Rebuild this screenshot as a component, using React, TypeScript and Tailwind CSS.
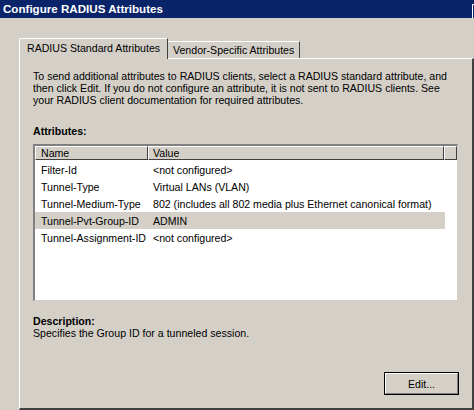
import React from 'react';

const rows = [
  { name: 'Filter-Id', value: '<not configured>' },
  { name: 'Tunnel-Type', value: 'Virtual LANs (VLAN)' },
  { name: 'Tunnel-Medium-Type', value: '802 (includes all 802 media plus Ethernet canonical format)' },
  { name: 'Tunnel-Pvt-Group-ID', value: 'ADMIN', selected: true },
  { name: 'Tunnel-Assignment-ID', value: '<not configured>' },
];

const App: React.FC = () => {
  return (
    <div className="w-[474px] h-[410px] bg-[#d4d0c8] overflow-hidden text-[10.6px] leading-[12px] text-black font-['Liberation_Sans',Arial,sans-serif]">
      {/* title bar */}
      <div className="h-[18px] bg-[#0a246a] flex items-center justify-between">
        <span className="pl-[3px] text-white font-bold text-[11.6px]">Configure RADIUS Attributes</span>
        <div className="w-[2px] h-[14px] mt-[4px] border-l border-t border-white" />
      </div>

      {/* tabs */}
      <div className="flex items-end ml-[19px] mt-[20px] h-[20px]">
        <div className="relative z-10 h-[21px] -mb-[1px] w-[149px] bg-[#d4d0c8] border-l border-t border-white rounded-tl-[2px] border-r border-r-[#404040] pl-[7px] pt-[3px] whitespace-nowrap">
          RADIUS Standard Attributes
        </div>
        <div className="h-[17px] w-[132px] border-t border-white border-r border-r-[#404040] pl-[5px] pt-[2px] whitespace-nowrap">
          Vendor-Specific Attributes
        </div>
      </div>

      {/* panel */}
      <div className="ml-[19px] w-[455px] h-[352px] border-t border-l border-white border-r-2 border-b-2 border-r-[#404040] border-b-[#404040] pl-[13px] pt-[11px]">
        <p className="whitespace-nowrap">
          To send additional attributes to RADIUS clients, select a RADIUS standard attribute, and
          <br />
          then click Edit. If you do not configure an attribute, it is not sent to RADIUS clients. See
          <br />
          your RADIUS client documentation for required attributes.
        </p>

        <div className="mt-[19px] font-bold">Attributes:</div>

        <div className="mt-[7px] w-[425px] h-[157px] bg-white border-t-2 border-l-2 border-t-[#808080] border-l-[#808080] border-b border-r border-b-[#d4d0c8] border-r-[#d4d0c8]">
          <div className="flex h-[14px]">
            <div className="w-[113px] bg-[#d4d0c8] border-t border-l border-white border-r border-b border-r-[#404040] border-b-[#404040] pl-[5px] leading-[12px]">
              Name
            </div>
            <div className="w-[296px] bg-[#d4d0c8] border-t border-l border-white border-r border-b border-r-[#404040] border-b-[#404040] pl-[4px] leading-[12px]">
              Value
            </div>
            <div className="flex-1 bg-[#d4d0c8] border-t border-l border-white border-r border-b border-r-[#404040] border-b-[#404040]" />
          </div>
          <div className="pt-[1px]">
            {rows.map((r) => (
              <div
                key={r.name}
                className={`flex h-[17px] items-center w-[410px] whitespace-nowrap ${r.selected ? 'bg-[#d4d0c8]' : ''}`}
              >
                <div className="w-[113px] pl-[6px]">{r.name}</div>
                <div className="pl-[5px]">{r.value}</div>
              </div>
            ))}
          </div>
        </div>

        <div className="mt-[14px] font-bold">Description:</div>
        <div>Specifies the Group ID for a tunneled session.</div>

        <div className="flex justify-end w-[426px] mt-[33px]">
          <button className="w-[75px] h-[23px] border border-black bg-[#d4d0c8] p-0">
            <div className="w-full h-full border-t border-l border-white border-r border-b border-r-[#808080] border-b-[#808080] flex items-center justify-center">
              Edit...
            </div>
          </button>
        </div>
      </div>
    </div>
  );
};

export default App;
